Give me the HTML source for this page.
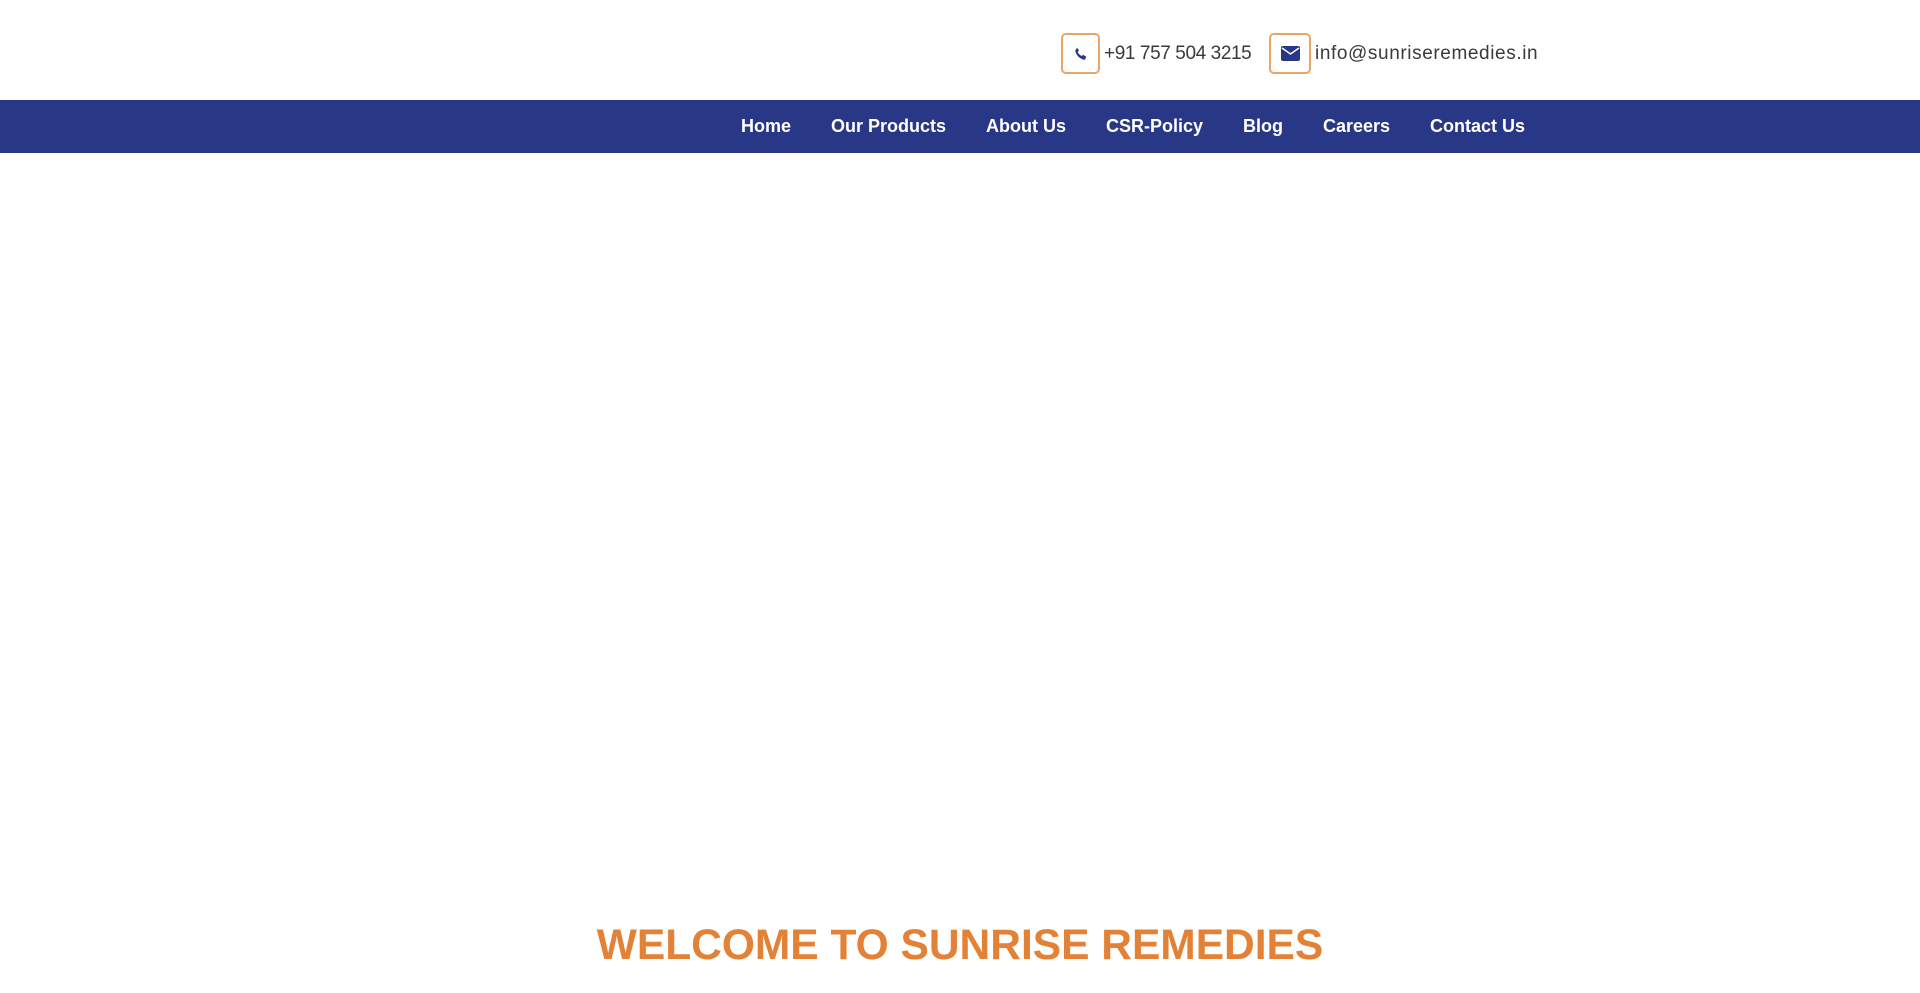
<!DOCTYPE html>
<html><head><meta charset="utf-8"><style>
*{margin:0;padding:0;box-sizing:border-box}
body{width:1920px;height:993px;background:#fff;font-family:"Liberation Sans",sans-serif;overflow:hidden;position:relative}
.box{position:absolute;top:33px;width:39px;height:41px;border:2px solid #eba564;border-radius:5px;display:flex;align-items:center;justify-content:center}
.t{position:absolute;top:42px;font-size:19px;color:#3a3a3a;line-height:24px}
.nav{position:absolute;top:100px;left:0;width:1920px;height:53px;background:#283886}
.nav a{position:absolute;top:15px;color:#fff;font-weight:bold;font-size:18px;text-decoration:none;line-height:22px}
h1{position:absolute;top:920px;left:0;width:1920px;text-align:center;color:#e38136;font-size:42.5px;font-weight:bold;letter-spacing:0;line-height:52px}
</style></head><body>
<div class="box" style="left:1061px"><svg width="16" height="16" viewBox="0 0 16 16"><path d="M4 1.5l2 3-1.3 1.5c.8 1.8 2.2 3.2 4 4L10.2 8.7l3 2-.8 2.3c-.3.6-1 .9-1.7.7C6.5 12.5 3.5 9.5 2.3 5.3 2.1 4.6 2.4 3.9 3 3.6z" fill="#283886"/></svg></div>
<div class="t" style="left:1104px;letter-spacing:-0.4px">+91 757 504 3215</div>
<div class="box" style="left:1269px;width:42px"><svg width="19" height="15" viewBox="0 0 19 15"><rect x="0" y="0" width="19" height="15" rx="2" fill="#283886"/><path d="M1 2l8.5 6L18 2" stroke="#fff" stroke-width="1.4" fill="none"/></svg></div>
<div class="t" style="left:1315px;letter-spacing:0.6px">info@sunriseremedies.in</div>
<div class="nav">
<a style="left:741px">Home</a>
<a style="left:831px">Our Products</a>
<a style="left:986px">About Us</a>
<a style="left:1106px">CSR-Policy</a>
<a style="left:1243px">Blog</a>
<a style="left:1323px">Careers</a>
<a style="left:1430px">Contact Us</a>
</div>
<h1>WELCOME TO SUNRISE REMEDIES</h1>
</body></html>
